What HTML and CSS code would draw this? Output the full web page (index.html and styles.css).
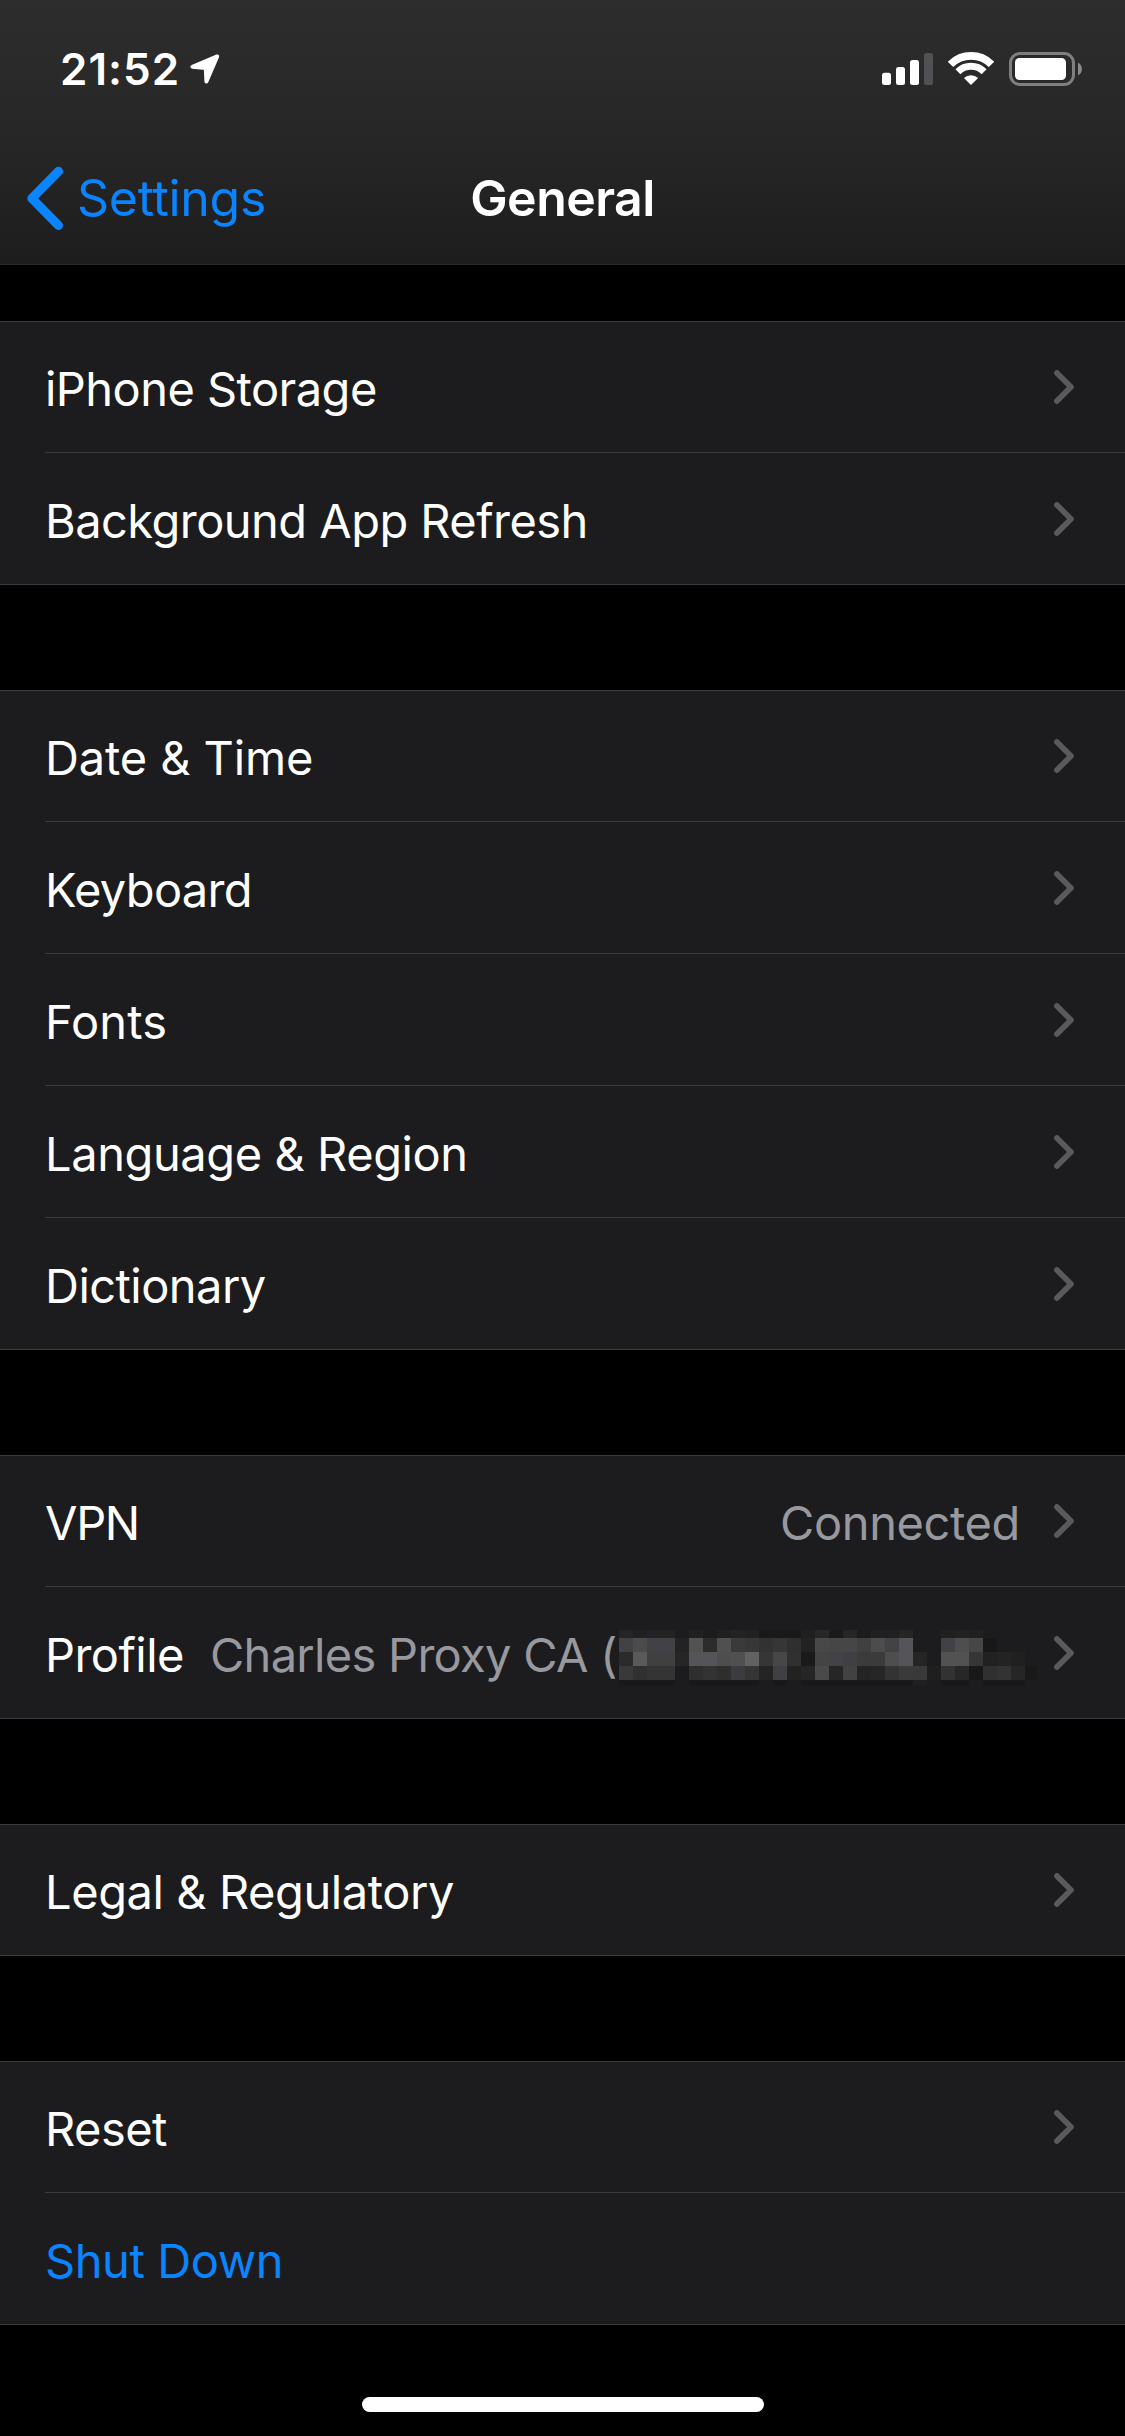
FILE: index.html
```html
<!DOCTYPE html>
<html lang="en">
<head>
<meta charset="utf-8">
<title>General</title>
<link rel="stylesheet" href="styles.css">
</head>
<body>
<svg class="defs" width="0" height="0">
  <symbol id="chevron" viewBox="0 0 20 34"><path d="M2.9 2.9 17 17 2.9 31.1" fill="none" stroke="#5a5a5e" stroke-width="5.6" stroke-linecap="round" stroke-linejoin="round"/></symbol>
</svg>
<header class="header">
  <div class="status">
    <span class="time">21:52</span>
    <svg class="location" width="32" height="32" viewBox="0 0 32 32"><path d="M28.2 3.4 3.4 13.8 16.8 15 17.4 28.4Z" fill="#fff" stroke="#fff" stroke-width="4" stroke-linejoin="round"/></svg>
    <div class="indicators">
      <svg width="51" height="34" viewBox="0 0 51 34">
        <g fill="#fff"><rect x="0" y="20.7" width="9" height="12.3" rx="2.5"/><rect x="14" y="15" width="9" height="18" rx="2.5"/><rect x="28" y="8" width="9" height="25" rx="2.5"/></g>
        <rect x="42" y="1" width="9" height="32" rx="2.5" fill="#515155"/>
      </svg>
      <svg width="46" height="34" viewBox="0 0 46 34">
        <g fill="none" stroke="#fff"><path d="M2.5 12.4A29 29 0 0 1 43.5 12.4" stroke-width="7.6"/><path d="M9.9 19.8A18.5 18.5 0 0 1 36.1 19.8" stroke-width="7"/></g>
        <path d="M23 33 15.9 25.9A10.5 10.5 0 0 1 30.1 25.9Z" fill="#fff"/>
      </svg>
      <svg width="74" height="34" viewBox="0 0 74 34">
        <rect x="1.5" y="1.5" width="63" height="31" rx="9.5" fill="none" stroke="#7f7f80" stroke-width="3"/>
        <rect x="6" y="6" width="51" height="22" rx="4.5" fill="#fff"/>
        <path d="M69 10.7C74.2 12.4 74.2 21.6 69 23.3Z" fill="#8a8a8b"/>
      </svg>
    </div>
  </div>
  <nav class="nav">
    <a class="back">
      <svg width="36" height="64" viewBox="0 0 36 64"><path d="M31.4 5.4 4.9 32.4 31.4 59.4" fill="none" stroke="#0a84ff" stroke-width="9.2" stroke-linecap="round" stroke-linejoin="round"/></svg>
      <span>Settings</span>
    </a>
    <h1 class="title">General</h1>
  </nav>
</header>
<main class="list">
  <section class="group">
    <div class="row"><span class="label">iPhone Storage</span><svg class="chev"><use href="#chevron"/></svg></div>
    <div class="row"><span class="label">Background App Refresh</span><svg class="chev"><use href="#chevron"/></svg></div>
  </section>
  <section class="group">
    <div class="row"><span class="label loose">Date &amp; Time</span><svg class="chev"><use href="#chevron"/></svg></div>
    <div class="row"><span class="label snug">Keyboard</span><svg class="chev"><use href="#chevron"/></svg></div>
    <div class="row"><span class="label looser">Fonts</span><svg class="chev"><use href="#chevron"/></svg></div>
    <div class="row"><span class="label ampersand">Language &amp; Region</span><svg class="chev"><use href="#chevron"/></svg></div>
    <div class="row"><span class="label">Dictionary</span><svg class="chev"><use href="#chevron"/></svg></div>
  </section>
  <section class="group">
    <div class="row"><span class="label tight">VPN</span><span class="value end">Connected</span><svg class="chev"><use href="#chevron"/></svg></div>
    <div class="row"><span class="label">Profile</span><span class="value profile">Charles Proxy CA (</span><svg class="mosaic" id="mosaic" width="420" height="55" viewBox="-2 0 420 55" shape-rendering="crispEdges"></svg><svg class="chev"><use href="#chevron"/></svg></div>
  </section>
  <section class="group">
    <div class="row"><span class="label ampersand">Legal &amp; Regulatory</span><svg class="chev"><use href="#chevron"/></svg></div>
  </section>
  <section class="group">
    <div class="row"><span class="label">Reset</span><svg class="chev"><use href="#chevron"/></svg></div>
    <div class="row"><span class="label action">Shut Down</span></div>
  </section>
</main>
<div class="home"></div>
<script src="mosaic.js"></script>
</body>
</html>
```
FILE: styles.css
```css
body {
  margin: 0;
  background: #000;
  color: #fff;
  font-family: Inter, "Liberation Sans", sans-serif;
  font-size: 47px;
  letter-spacing: -0.54px;
  white-space: nowrap;
}
.defs { position: absolute; }
svg { display: block; flex: none; }
.header {
  height: 265px;
  box-sizing: border-box;
  border-bottom: 1px solid #29292b;
  background: linear-gradient(#2d2d2e 0, #292929 90px, #262626 150px, #1d1d1e 264px);
}
.status {
  height: 132px;
  box-sizing: border-box;
  padding: 6px 42px 0 60px;
  display: flex;
  align-items: center;
}
.time { font-size: 44px; font-weight: 600; letter-spacing: 1px; }
.location { margin-left: 9px; }
.indicators { margin-left: auto; display: flex; gap: 15px; }
.nav {
  height: 132px;
  display: grid;
  grid-template-columns: 1fr auto 1fr;
  align-items: center;
  font-size: 50px;
}
.back {
  display: flex;
  align-items: center;
  gap: 14px;
  padding-left: 27px;
  color: #0a84ff;
  letter-spacing: -0.3px;
}
.title { margin: 0; font-size: 50px; font-weight: 600; }
.list { display: grid; gap: 105px; padding-top: 56px; }
.group { background: #1c1c1e; }
.row {
  height: 132px;
  box-sizing: border-box;
  padding: 0 51px 0 45px;
  display: flex;
  align-items: center;
  background: linear-gradient(#3b3b3e, #3b3b3e) right bottom / 1080px 1px no-repeat;
}
.row:first-child {
  background:
    linear-gradient(#3b3b3e, #3b3b3e) left top / 100% 1px no-repeat,
    linear-gradient(#3b3b3e, #3b3b3e) right bottom / 1080px 1px no-repeat;
}
.row:last-child {
  background:
    linear-gradient(#3b3b3e, #3b3b3e) left bottom / 100% 1px no-repeat;
}
.row:only-child {
  background:
    linear-gradient(#3b3b3e, #3b3b3e) left top / 100% 1px no-repeat,
    linear-gradient(#3b3b3e, #3b3b3e) left bottom / 100% 1px no-repeat;
}
.label, .value { padding-top: 2px; }
.loose { letter-spacing: -0.12px; }
.looser { letter-spacing: 0.1px; }
.ampersand { letter-spacing: -0.42px; }
.snug { letter-spacing: -0.68px; }
.tight { letter-spacing: -1.3px; }
.action { color: #0a84ff; letter-spacing: -0.42px; }
.value { color: #98989f; }
.end { margin-left: auto; margin-right: 34px; letter-spacing: -0.38px; }
.profile { margin-left: 26px; width: 407px; letter-spacing: -0.7px; }
.mosaic { margin-top: 9px; margin-right: -20px; }
.chev { width: 20px; height: 34px; margin-left: auto; }
.end + .chev { margin-left: 0; }
.home { width: 402px; height: 15px; margin: 72px 0 0 362px; border-radius: 8px; background: #fff; }
```
FILE: mosaic.js
```js
// Pixelated cover over the private part of the profile name.
// One grey level per 14px cell, "-" leaves the row background visible.
const rows = [
  { y: 0, h: 8, c: '25 20 23 23 - 20 - 20 23 21 19 19 19 20 27 1a 26 - 20 20 25 - - 20 22 20' },
  { y: 8, h: 14, c: '414146 4b 424246 424246 22 52 2c 50 3a 37 32 36 2f 22 48 46 46 40 4c 434347 545459 - - 414146 4e 46 18' },
  { y: 22, h: 14, c: '2b 5a 40 40 26 545459 545459 4e 50 62 36 47 30 1a 44 424247 3f3f44 3b 3b 4e 545459 25 - 52 52 36 21 23 20' },
  { y: 36, h: 14, c: '39 30 34 34 - 2e 33 2e 3c3c40 35 24 3f3f44 22 26 4a 26 42 24 26 33 3a 39 1f 32 27 18 30 33 26 19' },
  { y: 50, h: 5, c: '18 18 18 18 - 18 18 18 18 18 - 18 - 18 18 18 18 18 18 18 18 20 - 18 18 - 18 18 18' }
];
const mosaic = document.getElementById('mosaic');
for (const row of rows) {
  row.c.split(' ').forEach((c, i) => {
    if (c === '-') return;
    const cell = document.createElementNS('http://www.w3.org/2000/svg', 'rect');
    cell.setAttribute('x', i * 14);
    cell.setAttribute('y', row.y);
    cell.setAttribute('width', 14);
    cell.setAttribute('height', row.h);
    cell.setAttribute('fill', '#' + (c.length === 2 ? c + c + c : c));
    mosaic.appendChild(cell);
  });
}
```
